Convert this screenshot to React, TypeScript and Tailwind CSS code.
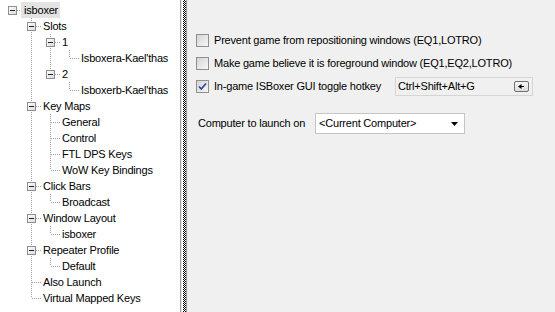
import React from 'react'

type TreeNode = { label: string; selected?: boolean; children?: TreeNode[] }

type FlatRow = {
  label: string
  level: number
  guides: boolean[]
  last: boolean
  hasChildren: boolean
  selected?: boolean
}

const tree: TreeNode = {
  label: 'isboxer',
  selected: true,
  children: [
    {
      label: 'Slots',
      children: [
        { label: '1', children: [{ label: "Isboxera-Kael'thas" }] },
        { label: '2', children: [{ label: "Isboxerb-Kael'thas" }] },
      ],
    },
    {
      label: 'Key Maps',
      children: [
        { label: 'General' },
        { label: 'Control' },
        { label: 'FTL DPS Keys' },
        { label: 'WoW Key Bindings' },
      ],
    },
    { label: 'Click Bars', children: [{ label: 'Broadcast' }] },
    { label: 'Window Layout', children: [{ label: 'isboxer' }] },
    { label: 'Repeater Profile', children: [{ label: 'Default' }] },
    { label: 'Also Launch' },
    { label: 'Virtual Mapped Keys' },
  ],
}

// flatten the tree into rows, keeping track of which ancestor columns need a vertical guide
function flatten(node: TreeNode, level: number, guides: boolean[], last: boolean, out: FlatRow[]) {
  out.push({
    label: node.label,
    level,
    guides,
    last,
    hasChildren: !!node.children?.length,
    selected: node.selected,
  })
  const kids = node.children || []
  kids.forEach((child, i) => {
    // the root is the only root node, so its column never carries a line
    const nextGuides = level === 0 ? [false] : [...guides, !last]
    flatten(child, level + 1, nextGuides, i === kids.length - 1, out)
  })
  return out
}

const rows = flatten(tree, 0, [], true, [])

const LINE = '#a0a0a0'

function GuideCell({ on }: { on: boolean }) {
  return (
    <svg width="19" height="16" className="shrink-0">
      {on && <line x1="8.5" y1="0" x2="8.5" y2="16" stroke={LINE} strokeDasharray="1 1" />}
    </svg>
  )
}

function OwnCell({ row }: { row: FlatRow }) {
  return (
    <svg width="19" height="16" className="shrink-0">
      <defs>
        <linearGradient id="boxfill" x1="0" y1="0" x2="1" y2="1">
          <stop offset="0" stopColor="#ffffff" />
          <stop offset="1" stopColor="#d8d8d8" />
        </linearGradient>
      </defs>
      {row.level > 0 && (
        <line x1="8.5" y1="0" x2="8.5" y2={row.last ? 8 : 16} stroke={LINE} strokeDasharray="1 1" />
      )}
      <line x1={row.hasChildren ? 13 : 9} y1="8.5" x2="19" y2="8.5" stroke={LINE} strokeDasharray="1 1" />
      {row.hasChildren && (
        <g>
          <rect x="4.5" y="4.5" width="8" height="8" fill="url(#boxfill)" stroke="#8f8f8f" />
          <line x1="6" y1="8.5" x2="11" y2="8.5" stroke="#222" />
        </g>
      )}
    </svg>
  )
}

function Checkbox({ checked }: { checked?: boolean }) {
  return (
    <div className="w-[13px] h-[13px] shrink-0 border border-[#8f8f8f] bg-gradient-to-br from-[#d4d4d4] to-[#f7f7f7] flex items-center justify-center">
      {checked && (
        <svg width="11" height="11" viewBox="0 0 11 11">
          <polyline points="2,5.5 4.3,8 9,2.5" fill="none" stroke="#2a4a9c" strokeWidth="1.7" />
        </svg>
      )}
    </div>
  )
}

function App() {
  return (
    <div className="w-[555px] h-[312px] flex overflow-hidden font-['Liberation_Sans',Arial,sans-serif] text-[11px] tracking-[-0.2px] text-black">
      {/* Tree pane */}
      <div className="w-[180px] shrink-0 bg-white pt-[2px] pl-[4px]">
        {rows.map((row, i) => (
          <div key={i} className="flex h-[16px] items-center">
            {row.guides.map((g, j) => (
              <GuideCell key={j} on={g} />
            ))}
            <OwnCell row={row} />
            <span
              className={`h-[16px] leading-[16px] pl-[1px] pr-[2px] whitespace-nowrap ${
                row.selected ? 'bg-[#e3e3e3] -ml-[2px] pl-[3px]' : ''
              }`}
            >
              {row.label}
            </span>
          </div>
        ))}
      </div>

      {/* Splitter */}
      <div className="w-[8px] shrink-0 flex">
        <div className="w-[1px] bg-[#a0a0a0]" />
        <div className="w-[1px] bg-[#e3e3e3]" />
        <div className="w-[1px] bg-white" />
        <div className="w-[3px] bg-[repeating-conic-gradient(#000_0_25%,#fff_0_50%)] bg-[length:2px_2px]" />
        <div className="w-[1px] bg-[#a0a0a0]" />
        <div className="w-[1px] bg-[#e3e3e3]" />
      </div>

      {/* Settings pane */}
      <div className="flex-1 bg-[#f0f0f0] pl-[8px] pt-[29px]">
        <div className="flex h-[23px] items-center">
          <Checkbox />
          <span className="ml-[5px] whitespace-nowrap">Prevent game from repositioning windows (EQ1,LOTRO)</span>
        </div>
        <div className="flex h-[23px] items-center">
          <Checkbox />
          <span className="ml-[5px] whitespace-nowrap">Make game believe it is foreground window (EQ1,EQ2,LOTRO)</span>
        </div>
        <div className="flex h-[23px] items-center">
          <div className="w-[199px] flex items-center">
            <Checkbox checked />
            <span className="ml-[5px] whitespace-nowrap">In-game ISBoxer GUI toggle hotkey</span>
          </div>
          <div className="w-[138px] h-[19px] border border-[#d5d5d5] bg-[#f0f0f0] flex items-center pl-[2px] pr-[3px]">
            <span className="flex-1 whitespace-nowrap">Ctrl+Shift+Alt+G</span>
            <div className="w-[15px] h-[11px] border border-[#707070] rounded-[2px] bg-gradient-to-b from-[#f6f6f6] to-[#dddddd] flex items-center justify-center">
              <svg width="9" height="5" viewBox="0 0 9 5">
                <polygon points="1,2.5 4.5,0 4.5,5" fill="#000" />
                <line x1="4" y1="2.5" x2="7" y2="2.5" stroke="#000" />
              </svg>
            </div>
          </div>
        </div>

        <div className="flex items-center mt-[15px] pl-[2px]">
          <span className="w-[117px] whitespace-nowrap">Computer to launch on</span>
          <div className="w-[150px] h-[21px] bg-white border border-[#c5c5c5] flex items-center pl-[3px] pr-[6px]">
            <span className="flex-1 whitespace-nowrap">&lt;Current Computer&gt;</span>
            <svg width="7" height="4" viewBox="0 0 7 4">
              <polygon points="0,0 7,0 3.5,4" fill="#000" />
            </svg>
          </div>
        </div>
      </div>
    </div>
  )
}

export default App
